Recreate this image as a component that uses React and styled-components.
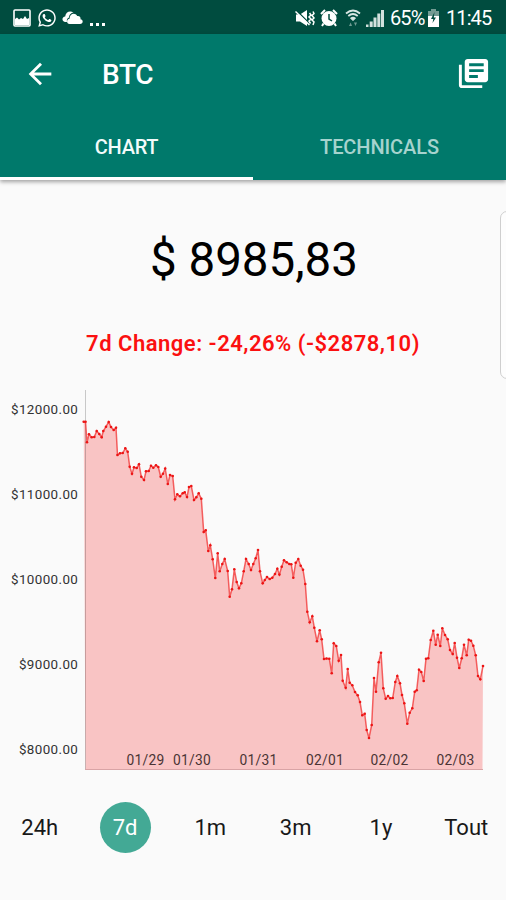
import React from 'react';
import styled, { createGlobalStyle } from 'styled-components';
import { MdArrowBack, MdLibraryBooks } from 'react-icons/md';
import { FaWhatsapp } from 'react-icons/fa';

const GlobalStyle = createGlobalStyle`
  * {
    box-sizing: border-box;
  }
  body {
    margin: 0;
    background: #fafafa;
    font-family: Roboto, "Noto Sans", sans-serif;
  }
`;

const Screen = styled.div`
  position: relative;
  display: flex;
  flex-direction: column;
  width: 506px;
  height: 900px;
  overflow: hidden;
  background: #fafafa;
`;

const StatusBar = styled.div`
  display: flex;
  justify-content: space-between;
  align-items: center;
  height: 34px;
  padding: 1px 13px 0 13px;
  background: #004c3f;
  color: #fff;
`;

const StatusGroup = styled.div`
  display: flex;
  align-items: center;
  height: 33px;
`;

const Slot = styled.span`
  display: flex;
  flex: none;
  width: ${p => p.w};
`;

const Ellipsis = styled.div`
  display: flex;
  gap: 3px;
  margin-top: 13px;

  i {
    width: 3px;
    height: 3px;
    background: #fff;
  }
`;

const StatusText = styled.span`
  width: ${p => p.w};
  font-size: 20px;
  letter-spacing: -0.9px;
  line-height: 34px;
  padding-top: 1px;
  white-space: nowrap;
`;

const Header = styled.header`
  height: 146px;
  background: #00796b;
  color: #fff;
  box-shadow: 0 2px 4px rgba(0, 0, 0, 0.35);
`;

const Toolbar = styled.div`
  display: flex;
  align-items: center;
  height: 79px;
  padding: 0 15px 0 23px;
`;

const Title = styled.h1`
  flex: 1;
  margin: 2px 0 0 45px;
  font-size: 28px;
  font-weight: 500;
  letter-spacing: -0.4px;
`;

const Tabs = styled.div`
  display: flex;
  height: 67px;
`;

const Tab = styled.div`
  flex: 1;
  padding-top: 2px;
  border-bottom: 3px solid ${p => (p.$active ? '#fff' : 'transparent')};
  color: ${p => (p.$active ? '#f2fbfa' : '#a6d3ce')};
  font-size: 20px;
  font-weight: 500;
  letter-spacing: ${p => p.spacing};
  line-height: 65px;
  text-align: center;
`;

const EdgeHandle = styled.div`
  position: absolute;
  top: 211px;
  right: -8px;
  width: 14px;
  height: 168px;
  border: 1px solid #cfcfcf;
  border-radius: 7px;
  background: #fdfdfd;
`;

const Price = styled.div`
  margin-top: 50px;
  height: 60px;
  font-size: 47.5px;
  line-height: 60px;
  text-align: center;
  color: #000;
  padding-left: 2px;
`;

const Change = styled.div`
  margin-top: 39px;
  height: 30px;
  font-size: 22px;
  font-weight: 600;
  letter-spacing: 0.5px;
  line-height: 30px;
  text-align: center;
  color: #fb1010;
`;

const Plot = styled.svg`
  display: block;
  flex: none;
  margin-top: 26px;
  font-family: Roboto, "Noto Sans", sans-serif;
`;

const Periods = styled.div`
  display: grid;
  grid-template-columns: repeat(6, 85.3px);
  justify-content: center;
  justify-items: center;
  margin-top: 27px;
  height: 51px;
`;

const Period = styled.div`
  width: 51px;
  height: 51px;
  border-radius: 50%;
  background: ${p => (p.$active ? '#43a995' : 'transparent')};
  color: ${p => (p.$active ? '#fff' : '#181818')};
  font-size: 22px;
  line-height: 52px;
  text-align: center;
`;

const ImageIcon = () => (
  <svg width="18" height="18" viewBox="0 0 18 18">
    <rect x="1" y="1" width="16" height="16" rx="1" fill="none" stroke="#fff" strokeWidth="1.6" />
    <path d="M2 16V10l2-1.500 2 2 2-1.500 2 1 2-3 2 3 2-1v7z" fill="#fff" />
  </svg>
);

const CloudIcon = () => (
  <svg width="21" height="15" viewBox="0 0 21 15">
    <path
      d="M3.500 12C-.5 11.500-.5 7 3.200 6.500 3.500 2 8 0 11.500 2.500 8 3.300 7.200 5.500 7 7.500 5.200 8 4.500 10 5 12z"
      fill="#fff"
    />
    <path
      d="M7.500 14C4.300 14 4.300 9.300 7.500 8.800 7.500 3.500 13.200 2 15.200 6 17.700 5.500 19 7.500 18.400 9.300 21.700 9.500 21.300 14 18 14z"
      fill="#fff"
    />
  </svg>
);

const MuteIcon = () => (
  <svg width="20" height="18" viewBox="0 0 20 18">
    <path d="M1 5.500h4L12 1v16l-7-4.500H1z" fill="#fff" />
    <path d="M1.500 1.500l13 13" stroke="#004c3f" strokeWidth="1.4" />
    <path d="M.5 2.500l14 13.500" stroke="#fff" strokeWidth="1.500" />
    <path
      d="M14.500 4l1.500 2-2 2 2 2-2 2 1.500 2.500M18 2.500l1 2-2 2 2 2.500-2 2 2 2-1 3"
      fill="none"
      stroke="#fff"
      strokeWidth="1.500"
    />
  </svg>
);

const AlarmIcon = () => (
  <svg width="18" height="18" viewBox="0 0 18 18">
    <circle cx="9" cy="9.500" r="7.500" fill="#fff" />
    <path d="M1 5l4-4M17 5l-4-4M3.500 14.500L2 17M14.500 14.500L16 17" stroke="#fff" strokeWidth="2" />
    <path d="M9 5v5l3 2" fill="none" stroke="#004c3f" strokeWidth="1.500" />
  </svg>
);

const WifiIcon = () => (
  <svg width="16" height="18" viewBox="0 0 16 18" fill="none" stroke="#d9e6e3">
    <path d="M1 4.500Q8-1.500 15 4.500" strokeWidth="1.800" />
    <path d="M3.300 7Q8 3 12.700 7" strokeWidth="1.700" />
    <path d="M5.500 9.200Q8 7 10.500 9.200L8 11.500z" fill="#d9e6e3" strokeWidth="1" />
    <path d="M4 17l1.700-3.500L7 17zM9 13.500h3L10.500 17z" fill="#6f9c93" stroke="none" />
  </svg>
);

const SignalIcon = () => (
  <svg width="18" height="18" viewBox="0 0 18 18" fill="#d3e1de">
    <rect x="0" y="15.500" width="2.500" height="2.500" />
    <rect x="3.700" y="12.500" width="3" height="5.500" />
    <rect x="7.500" y="8.500" width="3" height="9.500" />
    <rect x="11.300" y="4.500" width="3" height="13.500" />
    <rect x="15" y="1" width="3" height="17" />
  </svg>
);

const BatteryIcon = () => (
  <svg width="11" height="18" viewBox="0 0 11 18">
    <path d="M3 0h5v2h3v6H0V2h3z" fill="#739b93" />
    <path d="M0 7h11v11H0z" fill="#fff" />
    <path d="M6.500 3L3 10h2.300l-.8 4L8 8.500H5.800z" fill="#004c3f" />
  </svg>
);

// one [x, y] pair per hourly sample
const points = [
  [83.7, 421.7], [85.5, 421.7], [87, 442.3], [89, 434.3], [91.7, 437.3], [94.3, 437],
  [96.7, 431], [99.3, 434], [101.7, 437.3], [103.3, 431], [106, 426.7], [108.7, 422],
  [111, 427], [113.7, 430], [116, 427.7], [117.5, 455], [120, 453.3], [122.7, 453],
  [125.3, 448.3], [127.7, 451.7], [129.7, 466.7], [132, 473.7], [134, 467.3], [136.7, 468],
  [139, 464.3], [141.3, 476.7], [144, 480], [146, 471.3], [148.7, 471], [151, 465.7],
  [153.3, 467.7], [156, 465.3], [158.3, 467], [160.7, 476.7], [163, 473.7], [165.2, 468.6],
  [167.8, 484], [170, 475], [172.7, 476], [175, 499.3], [177.3, 494.3], [180, 496.3],
  [182.7, 493.3], [184.7, 492.3], [187, 497], [189, 487], [191.3, 486], [194, 500],
  [196.3, 497.3], [198.7, 493.3], [201.3, 498.7], [203.7, 532], [205.7, 530.3], [208.3, 551],
  [210.3, 545.3], [212.7, 559.3], [215.3, 578], [217.7, 553.3], [219.7, 571.3], [222.3, 564],
  [224.7, 559], [227.7, 571], [229.7, 596.7], [232, 589.3], [234.3, 569.3], [236.7, 582],
  [239, 588.3], [241.3, 583.3], [243.7, 571.3], [246, 559], [248.7, 564], [251, 570],
  [253.3, 564], [255.7, 558.3], [258, 550], [260, 571.3], [262.7, 583.3], [264.8, 580],
  [267, 577], [269.7, 579], [272.3, 577.7], [275, 574], [277.3, 568.7], [279.4, 574.6],
  [281.7, 566.7], [284, 560.3], [286.7, 562.3], [289.3, 564], [291.3, 564.3], [293.3, 577.7],
  [295.7, 562.7], [298.3, 559], [300.7, 565.7], [303, 569.7], [305.3, 584], [307.3, 611.7],
  [309.7, 622.3], [312.3, 616.3], [314.3, 627.7], [317, 641.3], [319.7, 630.3], [321.7, 639.3],
  [324, 659], [326.5, 658.5], [329.3, 658.7], [331.7, 673.3], [333.7, 643.3], [336.3, 646],
  [338.7, 660.7], [341, 655], [342.7, 680.7], [345.7, 687.7], [347.7, 669], [349.7, 682.7],
  [352.3, 685.3], [355, 692], [357.7, 695.3], [360, 702], [362.3, 715.3], [364.7, 713.7],
  [366.7, 730], [369, 738], [371.7, 725], [374, 678], [376, 691.7], [378.7, 662.3],
  [381, 652.7], [383.3, 688.3], [385.7, 698.7], [388, 696], [390.3, 698.3], [392.7, 698],
  [395.3, 682], [397.3, 676], [400, 683.3], [402, 695], [404.3, 703.3], [407.3, 723.7],
  [409.7, 712.7], [412.3, 708.3], [414.7, 691.7], [416.7, 690.3], [419, 669.7], [421.3, 672],
  [423.7, 681], [426, 658.7], [428.3, 658.3], [430.7, 640], [433.3, 630.7], [435.7, 644.7],
  [437.7, 634.7], [440.3, 646], [442.3, 628.3], [445, 635], [447.7, 639.3], [450, 650],
  [452.7, 654], [454.7, 643], [457, 657.7], [459.3, 668], [461.7, 658.3], [464, 644.7],
  [466.7, 655.3], [468.7, 639.7], [471, 640.7], [473.3, 645.7], [475.7, 655.3], [478, 676],
  [480.3, 679.3], [483, 666]
];

const prices = ['$12000.00', '$11000.00', '$10000.00', '$9000.00', '$8000.00'];

const dates = [
  ['01/29', 145.5],
  ['01/30', 192],
  ['01/31', 258.5],
  ['02/01', 325],
  ['02/02', 389.5],
  ['02/03', 455.5]
];

const periods = ['24h', '7d', '1m', '3m', '1y', 'Tout'];

function Chart() {
  const line = points.map(p => p.join(',')).join(' ');

  return (
    <Plot width="506" height="390" viewBox="0 385 506 390">
      <polygon points={`85.5,770 ${line} 482.500,770`} fill="#f9c4c4" />
      <path d="M85.500 390V770" stroke="#000" strokeOpacity="0.2" />
      <path d="M85 769.500H483" stroke="#d9a3a5" />
      <polyline points={line} fill="none" stroke="#f23c3c" strokeOpacity="0.8" strokeWidth="1.5" />
      {points.map(([x, y]) => (
        <circle key={x} cx={x} cy={y} r="1.3" fill="#ec1414" />
      ))}
      {prices.map((price, i) => (
        <text
          key={price}
          x="78.3"
          y={414 + i * 85}
          fontSize="13.4"
          fill="#333"
          textAnchor="end"
          letterSpacing="0.4"
        >
          {price}
        </text>
      ))}
      {dates.map(([date, x]) => (
        <text key={date} x={x} y="765" fontSize="13.800" fill="#4a3434" textAnchor="middle" letterSpacing="0.3">
          {date}
        </text>
      ))}
    </Plot>
  );
}

export default function App() {
  return (
    <Screen>
      <GlobalStyle />
      <StatusBar>
        <StatusGroup>
          <Slot w="24px"><ImageIcon /></Slot>
          <Slot w="25px"><FaWhatsapp size={20} /></Slot>
          <Slot w="28px"><CloudIcon /></Slot>
          <Ellipsis>
            <i />
            <i />
            <i />
          </Ellipsis>
        </StatusGroup>
        <StatusGroup>
          <Slot w="25px"><MuteIcon /></Slot>
          <Slot w="25px"><AlarmIcon /></Slot>
          <Slot w="21px"><WifiIcon /></Slot>
          <Slot w="24px"><SignalIcon /></Slot>
          <StatusText w="38px">65%</StatusText>
          <Slot w="18px"><BatteryIcon /></Slot>
          <StatusText w="47px">11:45</StatusText>
        </StatusGroup>
      </StatusBar>
      <Header>
        <Toolbar>
          <MdArrowBack size={34} />
          <Title>BTC</Title>
          <MdLibraryBooks size={35} />
        </Toolbar>
        <Tabs>
          <Tab $active spacing="-0.3px">CHART</Tab>
          <Tab spacing="-0.1px">TECHNICALS</Tab>
        </Tabs>
      </Header>
      <EdgeHandle />
      <Price>$ 8985,83</Price>
      <Change>7d Change: -24,26% (-$2878,10)</Change>
      <Chart />
      <Periods>
        {periods.map(label => (
          <Period key={label} $active={label === '7d'}>
            {label}
          </Period>
        ))}
      </Periods>
    </Screen>
  );
}
